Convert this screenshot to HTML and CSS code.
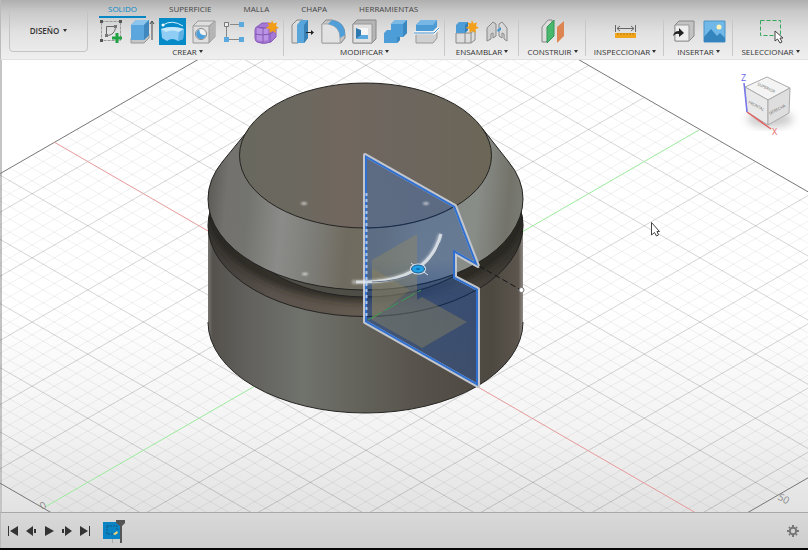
FILE: index.html
```html
<!DOCTYPE html>
<html lang="es">
<head>
<meta charset="utf-8">
<title>Diseño</title>
<link rel="stylesheet" href="styles.css">
</head>
<body>
<header class="toolbar">
  <button class="workspace">DISEÑO<span class="caret"></span></button>
  <div class="ribbon">
    <nav class="tabs">
      <a class="tab active" href="#">SOLIDO</a>
      <a class="tab" href="#">SUPERFICIE</a>
      <a class="tab" href="#">MALLA</a>
      <a class="tab" href="#">CHAPA</a>
      <a class="tab" href="#">HERRAMIENTAS</a>
    </nav>
    <div class="groups">
      <section class="group create">
        <div class="tools">
          <button class="tool" aria-label="Crear boceto"><svg viewBox="0 0 27 27"><path d="M4.500 3.500H23.500V22.500H4.500Z" fill="none" stroke="#999" stroke-dasharray="3 1"/><path d="M3 2h3v3H3zM22 2h3v3h-3zM3 21h3v3H3z" fill="#555"/><path d="M9.500 8.500H18.500C18.500 14 15 17.500 9.500 17.500Z" fill="none" stroke="#666"/><path d="M17 7h3v3h-3zM8 16h3v3H8z" fill="#777"/><path d="M20 15v10M15 20h10" stroke="#20a245" stroke-width="3"/></svg></button>
          <button class="tool" aria-label="Extruir"><svg viewBox="0 0 27 27"><path d="M3 20H16L21 16V20L16 25H3Z" fill="#c6c6c6" stroke="#999"/><path d="M3 7L8 2H21V17L16 22H3Z" fill="#5ba6dc"/><path d="M3 7L8 2H21L16 7Z" fill="#8bc4ec"/><path d="M16 7L21 2V17L16 22Z" fill="#3f87bd"/><path d="M24 22V4M22 6l2-3 2 3" fill="none" stroke="#444"/></svg></button>
          <button class="tool selected" aria-label="Revolución"><svg viewBox="0 0 27 27"><path d="M2 11Q13 7 25 11L24 21L19 23Q13 19 8 23L3 20Z" fill="#8fcdf5"/><path d="M2 11Q13 7 25 11L20 14Q13 11 7 14Z" fill="#c6e8fc"/><path d="M20 14L25 11L24 21L19 23Z" fill="#5fb1e4"/><path d="M4 7Q13 1 24 8" fill="none" stroke="#d8f1ff"/><circle cx="4" cy="7" r="1.500" fill="#fff"/></svg></button>
          <button class="tool" aria-label="Agujero"><svg viewBox="0 0 27 27"><path d="M3 8L8 3H25V19L19 25H3Z" fill="#dedede" stroke="#999"/><path d="M19 8L25 3V19L19 25Z" fill="#b5b5b5"/><path d="M3 8H19V25M19 8L25 3" fill="none" stroke="#999"/><circle cx="11" cy="16" r="5.500" fill="#f1f1f1" stroke="#888"/><path d="M7.500 12.500A5 5 0 1 0 16 17Q9 18 9.500 11.500Z" fill="#4c9fd8"/></svg></button>
          <button class="tool" aria-label="Patrón"><svg viewBox="0 0 27 27"><path d="M9 6.500H20M5.500 9V19M8 21.500H20" stroke="#888"/><path d="M3.500 4.500h4v4h-4z" fill="#eee" stroke="#777"/><path d="M18 4h5v5h-5zM3 19h5v5H3zM18 19h5v5h-5z" fill="#5aa9df"/></svg></button>
          <button class="tool" aria-label="Crear forma"><svg viewBox="0 0 27 27"><path d="M3 12Q3 9 6 8L10 5H18L24 9V19L19 24Q11 27 5 24Q3 23 3 20Z" fill="#a678d6" stroke="#8a5cba"/><path d="M5 10Q10 12 16 10V22Q10 24 5 22Z" fill="#bb93e4"/><path d="M3 16Q10 18 18 16L24 12M11 9V25M18 10V24M5 9Q12 11 19 9" fill="none" stroke="#8458b4"/><path d="M20 2l1.500 3.500 3.500-1-1 3.500 3 2-3.500 1 .5 4-3.500-2-3 2V11l-4-1 3.500-2-1.500-3.500 3.500 1Z" fill="#f29d18"/></svg></button>
        </div>
        <button class="menu">CREAR<span class="caret"></span></button>
      </section>
      <section class="group modify">
        <div class="tools">
          <button class="tool" aria-label="Pulsar/tirar"><svg viewBox="0 0 27 27"><path d="M3 7L8 2H14V20L9 25H3Z" fill="#dcdcdc" stroke="#888"/><path d="M8 7L12 2H19V20L15 25H8Z" fill="#58a5dc"/><path d="M15 7L19 2V20L15 25Z" fill="#3980b7"/><path d="M17 14h5v-2l3 2.500-3 2.500v-2h-5Z" fill="#222"/></svg></button>
          <button class="tool" aria-label="Empalme"><svg viewBox="0 0 27 27"><path d="M2 6L6 2H12Q25 4 25 17V20L21 25H2Z" fill="#c4c4c4" stroke="#888"/><path d="M2 6H8Q20 8 20 20V25H2Z" fill="#e2e2e2" stroke="#aaa"/><path d="M8 6L12 2Q25 4 25 17L20 20Q20 8 8 6Z" fill="#519fd8"/></svg></button>
          <button class="tool" aria-label="Vaciado"><svg viewBox="0 0 27 27"><path d="M2 6L6 2H25V21L21 25H2Z" fill="#b5b5b5" stroke="#888"/><path d="M2 6H21V25H2Z" fill="#e1e1e1" stroke="#999"/><path d="M5 10H17V21H5Z" fill="#f6f6f6"/><path d="M5 10L10 12V18L5 21Z" fill="#2f79b1"/><path d="M10 17H17V21H5Z" fill="#5aa9df"/></svg></button>
          <button class="tool" aria-label="Combinar"><svg viewBox="0 0 27 27"><path d="M2 15L5 12H9V6L13 2H25V15L21 19H18V22L15 25H2Z" fill="#4d9dd8"/><path d="M9 6L13 2H25L21 6Z" fill="#7bb9e5"/><path d="M21 6L25 2V15L21 19ZM15 19H18V22L15 25Z" fill="#3b87c0"/></svg></button>
          <button class="tool" aria-label="Dividir cuerpo"><svg viewBox="0 0 27 27"><path d="M3 16H20L24 12V20L20 25H3Z" fill="#d0d0d0" stroke="#999"/><path d="M3 7L8 2H24V9L20 13H3Z" fill="#4c9bd5"/><path d="M3 7L8 2H24L20 7Z" fill="#77b7e5"/><path d="M1 15H21L26 10" fill="none" stroke="#fff" stroke-width="3"/><path d="M1 15H21L26 10" fill="none" stroke="#3b89c5"/></svg></button>
        </div>
        <button class="menu">MODIFICAR<span class="caret"></span></button>
      </section>
      <section class="group assemble">
        <div class="tools">
          <button class="tool" aria-label="Nuevo componente"><svg viewBox="0 0 27 27"><path d="M3 15H18L22 12V22L18 25H3ZM12 15V25M18 15V25" fill="#ddd" stroke="#888"/><path d="M3 7L6 4H15V12L12 15H3Z" fill="#4c9dd8"/><path d="M12 7L15 4V12L12 15Z" fill="#347eb5"/><path d="M19 2l1.500 3.500 3.500-1-1 3.500 3 2-3.500 1 .5 4-3.500-2-3 2V11l-4-1 3.500-2-1.500-3.500 3.500 1Z" fill="#f3a01d"/></svg></button>
          <button class="tool" aria-label="Unión"><svg viewBox="0 0 27 27"><path d="M3 10L9 4L12 6V18L9 20V15L7 16V21L3 23Z" fill="#cfcfcf" stroke="#888"/><path d="M23 10L18 4L15 6V18L18 20V15L20 16V21L23 23Z" fill="#d9d9d9" stroke="#888"/><path d="M13 12L17 9V12L14 14Z" fill="#4797d1"/></svg></button>
        </div>
        <button class="menu">ENSAMBLAR<span class="caret"></span></button>
      </section>
      <section class="group construct">
        <div class="tools">
          <button class="tool" aria-label="Plano de desfase"><svg viewBox="0 0 27 27"><path d="M3 9L9 2H13V18L7 24H3Z" fill="#ddd" stroke="#888"/><path d="M8 9L15 2V18L8 25Z" fill="#48b86d" stroke="#359458"/><path d="M18 9L25 3V18L18 25Z" fill="#dc8553"/></svg></button>
        </div>
        <button class="menu">CONSTRUIR<span class="caret"></span></button>
      </section>
      <section class="group inspect">
        <div class="tools">
          <button class="tool" aria-label="Medir"><svg viewBox="0 0 27 27"><path d="M3.500 7V14M23.500 7V14M5 10.500H22M8 8L5 10.500l3 2.500M19 8l3 2.500-3 2.500" fill="none" stroke="#666"/><path d="M3 15H24V20H3Z" fill="#f0a51b"/><path d="M6 15v2M9 15v2M12 15v2M15 15v2M18 15v2M21 15v2" stroke="#b97a0c"/></svg></button>
        </div>
        <button class="menu">INSPECCIONAR<span class="caret"></span></button>
      </section>
      <section class="group insert">
        <div class="tools">
          <button class="tool" aria-label="Insertar derivada"><svg viewBox="0 0 27 27"><path d="M5 7L9 3H24V18L19 23H5Z" fill="#c3c3c3" stroke="#888"/><path d="M5 7H19V23H5Z" fill="#eee" stroke="#999"/><path d="M3 18Q4 13 9 13V10L14 15L9 19V16Q6 15 3 18Z" fill="#222"/></svg></button>
          <button class="tool" aria-label="Lienzo"><svg viewBox="0 0 27 27"><path d="M3 3H24V24H3Z" fill="#70b8e8" stroke="#4d94c5"/><path d="M3 19L10 11L16 18L19 15L24 20V24H3Z" fill="#3485bd"/><circle cx="18" cy="9" r="2.500" fill="#fff2b6"/></svg></button>
        </div>
        <button class="menu">INSERTAR<span class="caret"></span></button>
      </section>
      <section class="group select">
        <div class="tools">
          <button class="tool" aria-label="Seleccionar"><svg viewBox="0 0 27 27"><path d="M3.500 2.500H23.500V17.500H3.500Z" fill="none" stroke="#35a75c" stroke-dasharray="4 2"/><path d="M18 13V23L20.500 21L23 25L25 24L23 20H26Z" fill="#fff" stroke="#444"/></svg></button>
        </div>
        <button class="menu">SELECCIONAR<span class="caret"></span></button>
      </section>
    </div>
  </div>
</header>

<main class="viewport">
<svg class="scene" viewBox="0 59 808 454" preserveAspectRatio="xMidYMid slice" role="img" aria-label="Vista del modelo">
  <defs>
    <linearGradient id="top"><stop offset="0" stop-color="#69685e"/><stop offset=".22" stop-color="#6b685f"/><stop offset=".4" stop-color="#71675f"/><stop offset=".7" stop-color="#6c665e"/><stop offset="1" stop-color="#6b6656"/></linearGradient>
    <linearGradient id="cone" gradientUnits="userSpaceOnUse" x1="208" y1="190" x2="523" y2="220"><stop offset="0" stop-color="#5d5b56"/><stop offset=".06" stop-color="#73726e"/><stop offset=".13" stop-color="#73736f"/><stop offset=".24" stop-color="#8b8c89"/><stop offset=".34" stop-color="#7e7e79"/><stop offset=".45" stop-color="#6f6b60"/><stop offset=".56" stop-color="#716e60"/><stop offset=".68" stop-color="#868a87"/><stop offset=".85" stop-color="#898d88"/><stop offset=".95" stop-color="#73736a"/><stop offset="1" stop-color="#7b7d75"/></linearGradient>
    <linearGradient id="body"><stop offset="0" stop-color="#777570"/><stop offset=".015" stop-color="#55524d"/><stop offset=".14" stop-color="#63625e"/><stop offset=".3" stop-color="#70726c"/><stop offset=".5" stop-color="#626159"/><stop offset=".7" stop-color="#555049"/><stop offset=".9" stop-color="#4d4840"/><stop offset=".985" stop-color="#5b554d"/><stop offset="1" stop-color="#8f8b85"/></linearGradient>
    <linearGradient id="groove"><stop offset="0" stop-color="#3b3834"/><stop offset=".2" stop-color="#5a524c"/><stop offset=".5" stop-color="#655c51"/><stop offset=".75" stop-color="#4f4841"/><stop offset="1" stop-color="#373530"/></linearGradient>
    <linearGradient id="shade" gradientUnits="userSpaceOnUse" x1="0" y1="155" x2="0" y2="386"><stop offset="0" stop-color="#536c94" stop-opacity=".66"/><stop offset=".45" stop-color="#516f9c" stop-opacity=".6"/><stop offset=".6" stop-color="#294f91" stop-opacity=".6"/><stop offset="1" stop-color="#30518a" stop-opacity=".55"/></linearGradient>
    <clipPath id="profile"><path d="M365 155L455 206L478 266L455 253V277L478 289V386L365 322Z"/></clipPath>
    <clipPath id="rim"><ellipse cx="366" cy="225.500" rx="157.500" ry="91"/></clipPath>
    <filter id="soft" x="-20%" y="-20%" width="140%" height="140%"><feGaussianBlur stdDeviation="4"/></filter>
    <filter id="glow" x="-20%" y="-20%" width="140%" height="140%"><feGaussianBlur stdDeviation="1"/></filter>
  </defs>

  <path id="minor" class="grid-minor"/>
  <path id="major" class="grid-major"/>
  <path id="edge" class="grid-edge"/>
  <path class="axis-red" d="M54 142L696 513"/>
  <path class="axis-green" d="M45 507L699 130"/>
  <text class="grid-label" transform="translate(777 499) rotate(28)">50</text>
  <text class="grid-label" transform="translate(42 510) rotate(-28)">0</text>

  <path d="M208 225V322A157.500 91 0 0 0 523 322V225Z" fill="url(#body)"/>
  <path d="M208 322A157.500 91 0 0 0 523 322" class="outline"/>
  <ellipse cx="365.500" cy="225.500" rx="157.500" ry="91" fill="url(#groove)" class="outlined"/>
  <g clip-path="url(#rim)">
    <ellipse cx="366" cy="204" rx="155" ry="91" fill="none" stroke="#1d1b19" stroke-width="13" opacity=".75" filter="url(#soft)"/>
  </g>
  <ellipse cx="366" cy="213" rx="133" ry="84" fill="#4e4d46" class="outlined"/>
  <path d="M250 128L223 161Q208 179 208 199A157.500 91 0 0 0 523 199Q523 179 508 161L482 128Z" fill="url(#cone)" class="outlined"/>
  <ellipse cx="365.500" cy="155.500" rx="126" ry="72.500" fill="url(#top)" class="outlined"/>

  <path d="M365 155L455 206L478 266L455 253V277L478 289V386L365 322Z" fill="url(#shade)"/>
  <g clip-path="url(#profile)">
    <path d="M366 228A126 72.500 0 0 0 455 206M366 290A157.500 91 0 0 0 478 263M366 297A133 84 0 0 0 458 274M366 316.500A157.500 91 0 0 0 478 289" class="under-line"/>
  </g>
  <path d="M372 260L417 234V345L372 320ZM378 322L422 297L467 322L422 348Z" fill="#9c8c5c" opacity=".36"/>
  <path d="M372 268L410 290L372 320Z" fill="#a98a4e" opacity=".25"/>
  <path d="M368 320L421 290" stroke="#3c9a55" stroke-dasharray="16 3"/>
  <path d="M365 155L455 206L478 266L455 253V277L478 289V386L365 322Z" class="profile-halo"/>
  <path d="M365 155L455 206L478 266L455 253V277L478 289V386L365 322Z" class="profile-edge" clip-path="url(#profile)"/>
  <path d="M366.500 193V316" class="axis-dots"/>

  <path d="M352 282Q428 284 440 234" fill="none" stroke="#fff" stroke-width="4" opacity=".4" filter="url(#glow)"/>
  <path d="M356 282Q428 284 441 234" fill="none" stroke="#e4e9ed" stroke-width="3" opacity=".8"/>
  <path d="M372 282Q427 281 440 243" fill="none" stroke="#66758a"/>
  <path d="M411 263L428 275" stroke="#dce4ea"/>
  <ellipse cx="418" cy="269" rx="8" ry="5.500" fill="#dce4ea"/>
  <ellipse cx="418" cy="269" rx="6.500" ry="4" fill="#24a1e4" stroke="#14568a"/>
  <ellipse cx="418" cy="269" rx="2" ry="1" fill="#0d6dad"/>
  <g fill="#eee" filter="url(#glow)"><ellipse cx="304" cy="203.500" rx="3" ry="1"/><ellipse cx="426" cy="203.500" rx="3" ry="1"/><ellipse cx="305" cy="274" rx="3" ry="1"/></g>
  <path d="M479 266L521 290" stroke="#171717" stroke-dasharray="6 3"/>
  <circle cx="521.500" cy="290" r="2.500" fill="#fff" stroke="#777"/>

  <ellipse cx="770" cy="119" rx="23" ry="8" fill="#888" opacity=".45" filter="url(#soft)"/>
  <path d="M745 87L767 77L790 88L768 100Z" fill="#f4f4f4" class="cube-edge"/>
  <path d="M745 87L768 100V125L747 112Z" fill="#e9e9e9" class="cube-edge"/>
  <path d="M768 100L790 88L789 113L768 125Z" fill="#dedede" class="cube-edge"/>
  <text class="cube-label" transform="translate(757 85) rotate(25)">SUPERIOR</text>
  <text class="cube-label" transform="translate(748 103) rotate(28)">FRONTAL</text>
  <text class="cube-label" transform="translate(770 115) rotate(-28)">DERECHA</text>
  <path d="M744 83L747 112" stroke="#7777ed" stroke-width="1.500"/>
  <path d="M747 112L771 129" stroke="#e16262" stroke-width="1.500"/>
  <text x="741" y="81" class="axis-label z">Z</text>
  <text x="772" y="135" class="axis-label x">X</text>
  <path d="M651.500 222.500V235L654.500 232.500L656.500 236L658.500 235L657 231.500H659.500Z" fill="#fff" stroke="#444"/>
</svg>
</main>

<footer class="timeline">
  <div class="playback">
    <button class="play" aria-label="Inicio"><svg viewBox="0 0 12 12"><path d="M1 1h1v10H1zM11 1v10L3 6z"/></svg></button>
    <button class="play" aria-label="Anterior"><svg viewBox="0 0 12 12"><path d="M8 1v10L1 6zM9 4h2v4H9z"/></svg></button>
    <button class="play" aria-label="Reproducir"><svg viewBox="0 0 12 12"><path d="M2 1v10l9-5z"/></svg></button>
    <button class="play" aria-label="Siguiente"><svg viewBox="0 0 12 12"><path d="M4 1v10l7-5zM1 4h2v4H1z"/></svg></button>
    <button class="play" aria-label="Fin"><svg viewBox="0 0 12 12"><path d="M1 1v10l8-5zM10 1h1v10h-1z"/></svg></button>
  </div>
  <button class="feature" aria-label="Boceto1"><svg viewBox="0 0 24 24"><path d="M0 3H18V20H0Z" fill="#0b84c5"/><path d="M4 7H14V11M4 7V15H10" fill="none" stroke="#17577d" stroke-dasharray="2 1"/><path d="M10 15L14 12L15 14L12 16Z" fill="#f4d27b"/><path d="M9.500 20V24" stroke="#aaa"/><path d="M13 1H22V4L19 7V24H17V7L13 4Z" fill="#555"/></svg></button>
  <button class="settings" aria-label="Configuración"><svg viewBox="0 0 12 12"><circle cx="6" cy="6" r="3.200" fill="none" stroke="#777" stroke-width="2"/><path d="M6 0v2M6 10v2M0 6h2M10 6h2M2 2l1 1M9 9l1 1M10 2L9 3M2 10l1-1" stroke="#777" stroke-width="2"/></svg></button>
</footer>
<script src="grid.js"></script>
</body>
</html>
```

FILE: styles.css
```css
* { box-sizing: border-box; }

body {
  margin: 0;
  height: 100vh;
  display: flex;
  flex-direction: column;
  font-family: "Open Sans", "Liberation Sans", sans-serif;
  font-size: 8px;
  color: #333;
  background: #fff;
  border-bottom: 2px solid #050505;
}

button {
  margin: 0;
  padding: 0;
  border: 0;
  background: none;
  font: inherit;
  color: inherit;
}

svg { display: block; }

.toolbar {
  display: flex;
  flex: none;
  background: linear-gradient(#afafaf, #c9c9c9 20%, #e1e1e1 55%, #efefef);
  border-left: 1px solid #bbb;
  border-bottom: 1px solid #e0e0e0;
}

.workspace {
  width: 79px;
  height: 44px;
  margin: 8px 3px 7px 8px;
  border: 1px solid #c4c4c4;
  border-radius: 4px;
  font-weight: 600;
}

.caret {
  display: inline-block;
  margin-left: 4px;
  border: 2px solid transparent;
  border-top: 3px solid #333;
  border-bottom: 0;
  vertical-align: 2px;
}

.ribbon { flex: 1; min-width: 0; }

.tabs {
  display: flex;
  gap: 14px;
  height: 18px;
  padding-left: 8px;
}

.tab {
  padding: 0 9px;
  line-height: 17px;
  color: #444;
  text-decoration: none;
  border-bottom: 2px solid transparent;
}

.tab.active {
  color: #0787c4;
  border-color: #0787c4;
}

.groups { display: flex; }

.group {
  display: flex;
  flex-direction: column;
  align-items: center;
  background: linear-gradient(#c8c8c8, #c8c8c8) right 2px / 1px 36px no-repeat;
}

.create { flex: 193 1 0; }
.modify { flex: 161 1 0; }
.assemble { flex: 74 1 0; }
.construct { flex: 67 1 0; }
.inspect { flex: 78 1 0; }
.insert { flex: 69 1 0; }
.select { flex: 75 1 0; background: none; }

.tools { display: flex; gap: 4px; }

.tool { width: 27px; height: 27px; }
.tool.selected { background: #078ac8; }

.menu {
  height: 13px;
  line-height: 13px;
  white-space: nowrap;
}

.menu .caret { margin-left: 2px; }

.viewport {
  flex: 1;
  min-height: 0;
  background:
    linear-gradient(#c4c4c4, #c4c4c4) left / 2px 100% no-repeat,
    linear-gradient(#fff 55%, #f3f3f3 82%, #e2e2e2);
}

.scene { width: 100%; height: 100%; }

.grid-minor { stroke: #000; stroke-opacity: .06; fill: none; }
.grid-major { stroke: #000; stroke-opacity: .17; fill: none; }
.grid-edge { stroke: #777; fill: none; }
.axis-red { stroke: #e69a9a; }
.axis-green { stroke: #9cea9c; }
.grid-label { font-size: 10px; fill: #888; }

.outline { fill: none; stroke: #242321; }
.outlined { stroke: #242321; }
.under-line { fill: none; stroke: #172b48; }

.profile-halo { fill: none; stroke: #c2c6cc; stroke-width: 4; stroke-linejoin: round; }
.profile-edge { fill: none; stroke: #2f6fd0; stroke-width: 4; }
.axis-dots { stroke: #a8c5ee; stroke-width: 2; stroke-dasharray: 3 3; }

.cube-edge { stroke: #aaa; }
.cube-label { font-size: 4px; fill: #666; }
.axis-label { font-size: 9px; }
.axis-label.z { fill: #6868e8; }
.axis-label.x { fill: #e86868; }

.timeline {
  display: flex;
  flex: none;
  align-items: center;
  height: 36px;
  padding: 0 9px 0 6px;
  border-top: 1px solid #a8a8a8;
  border-left: 1px solid #bbb;
  background: linear-gradient(#d9d9d9, #cdcdcd);
}

.playback { display: flex; gap: 6px; }
.play { width: 12px; height: 12px; fill: #333; }
.feature { width: 24px; height: 24px; margin-left: 12px; }
.settings { width: 12px; height: 12px; margin-left: auto; }
```

FILE: grid.js
```js
// Ground grid: isometric cells measured from the origin, five minor cells per major cell.
const origin = { x: 366, y: 322 };
const cell = { x: 11.13, y: 6.416 };
const u = [-28, 32];
const v = [-29, 30];

function point(a, b) {
  return (origin.x + (a + b) * cell.x).toFixed(1) + " " + (origin.y + (a - b) * cell.y).toFixed(1);
}

let minor = "";
let major = "";
for (let a = u[0] + 1; a < u[1]; a++) {
  if (a === 0) continue;
  const line = "M" + point(a, v[0]) + "L" + point(a, v[1]);
  if (a % 5 === 0) major += line; else minor += line;
}
for (let b = v[0] + 1; b < v[1]; b++) {
  if (b === 0) continue;
  const line = "M" + point(u[0], b) + "L" + point(u[1], b);
  if (b % 5 === 0) major += line; else minor += line;
}
document.getElementById("minor").setAttribute("d", minor);
document.getElementById("major").setAttribute("d", major);
document.getElementById("edge").setAttribute("d",
  "M" + point(u[0], v[0]) + "L" + point(u[0], v[1]) + "L" + point(u[1], v[1]) + "L" + point(u[1], v[0]) + "Z");
```
